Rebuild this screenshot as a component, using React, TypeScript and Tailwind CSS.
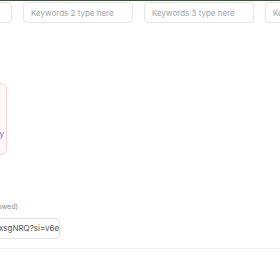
import React from "react";

const App: React.FC = () => {
  const keywords = ["Keywords 1 type here", "Keywords 2 type here", "Keywords 3 type here", "Keywords 4 type here"];

  return (
    <div
      className="w-[280px] h-[280px] overflow-hidden bg-white"
      style={{ fontFamily: "Inter, 'Open Sans', sans-serif" }}
    >
      <div className="h-px bg-[#3a5534]" />
      <div className="mt-px ml-[-98px] flex gap-[11px]">
        {keywords.map((k) => (
          <div
            key={k}
            className="shrink-0 w-[110px] h-[21px] border border-[#e6e6e6] rounded-[4px] px-[7px] flex items-center text-[8px] text-[#a0a4aa] whitespace-nowrap"
          >
            {k}
          </div>
        ))}
      </div>

      <div className="mt-[60px] ml-[-100px] w-[107px] h-[72px] border border-[#fbd3d7] bg-[#fff7f7] rounded-[6px] flex items-end justify-end pr-[2px] pb-[14px] text-[8px] whitespace-nowrap">
        <span className="text-[#4a7fc1]">Copy</span>
      </div>

      <div className="mt-[47px] ml-[-100px] w-[118px] text-right text-[7px] text-[#8a8a8a] whitespace-nowrap">
        (Multiple links allowed)
      </div>

      <div className="mt-[5px] ml-[-100px] w-[160px] h-[21px] border border-[#e3e3e3] rounded-[4px] flex items-center justify-end overflow-hidden pr-[1px]">
        <span className="mr-[-3px] text-[8px] text-[#555] whitespace-nowrap">https://youtu.be/xsgNRQ?si=v6ei</span>
      </div>

      <div className="mt-[9px] h-px bg-[#f0f0f0]" />
    </div>
  );
};

export default App;
